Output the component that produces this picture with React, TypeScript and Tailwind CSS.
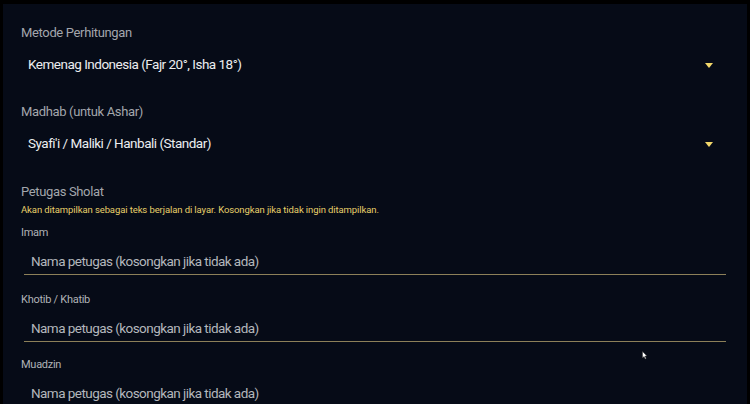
import React from "react";

const Label = ({ children, className = "" }: { children: React.ReactNode; className?: string }) => (
  <div className={`h-[20px] flex items-center leading-none ${className}`}>{children}</div>
);

const SelectRow = ({ value }: { value: string }) => (
  <div className="h-[46px] flex items-center justify-between pl-[7px] pr-[12px]">
    <span className="text-[13.5px] tracking-[-0.5px] text-[#eceef0] leading-none">{value}</span>
    <svg width="8" height="5" viewBox="0 0 8 5" className="mr-[1px]">
      <path d="M0 0 H8 L4 5 Z" fill="#f2d76a" />
    </svg>
  </div>
);

const InputRow = () => (
  <div className="ml-[3px] pt-[10px] pb-[2px] border-b border-[#8c8059]">
    <div className="h-[20px] flex items-center pl-[7px] text-[13.5px] tracking-[-0.55px] text-[#b4b7bc] leading-none">
      Nama petugas (kosongkan jika tidak ada)
    </div>
  </div>
);

export default function App() {
  return (
    <div
      className="w-[750px] h-[404px] bg-black pt-[4px] pl-[3px] pr-[3px] overflow-hidden relative"
      style={{ fontFamily: "Roboto, 'Noto Sans', sans-serif" }}
    >
      <div className="h-full bg-[#060b17] pt-[18px] pl-[18px] pr-[21px] overflow-hidden">
        <Label className="text-[13px] tracking-[-0.35px] text-[#a3a6ac]">Metode Perhitungan</Label>
        <SelectRow value="Kemenag Indonesia (Fajr 20°, Isha 18°)" />
        <Label className="mt-[13px] text-[13px] tracking-[-0.35px] text-[#a3a6ac]">Madhab (untuk Ashar)</Label>
        <SelectRow value="Syafi'i / Maliki / Hanbali (Standar)" />
        <Label className="mt-[14px] text-[13px] tracking-[-0.35px] text-[#a3a6ac]">Petugas Sholat</Label>
        <div className="h-[18px] flex items-center text-[9.5px] tracking-[-0.1px] text-[#e6cf6a] leading-none">
          Akan ditampilkan sebagai teks berjalan di layar. Kosongkan jika tidak ingin ditampilkan.
        </div>
        <Label className="mt-[3px] text-[11px] tracking-[-0.27px] text-[#b0b3b8]">Imam</Label>
        <InputRow />
        <Label className="mt-[14px] text-[11px] tracking-[-0.27px] text-[#b0b3b8]">Khotib / Khatib</Label>
        <InputRow />
        <Label className="mt-[12px] text-[11px] tracking-[-0.27px] text-[#b0b3b8]">Muadzin</Label>
        <InputRow />
      </div>
      <svg width="6" height="9" viewBox="0 0 6 9" className="absolute left-[642px] top-[351px]">
        <path d="M0.5 0.5 L0.5 7 L2 5.5 L3.2 8 L4.2 7.5 L3 5 L5 5 Z" fill="#ffffff" stroke="#333" strokeWidth="0.5" />
      </svg>
    </div>
  );
}
